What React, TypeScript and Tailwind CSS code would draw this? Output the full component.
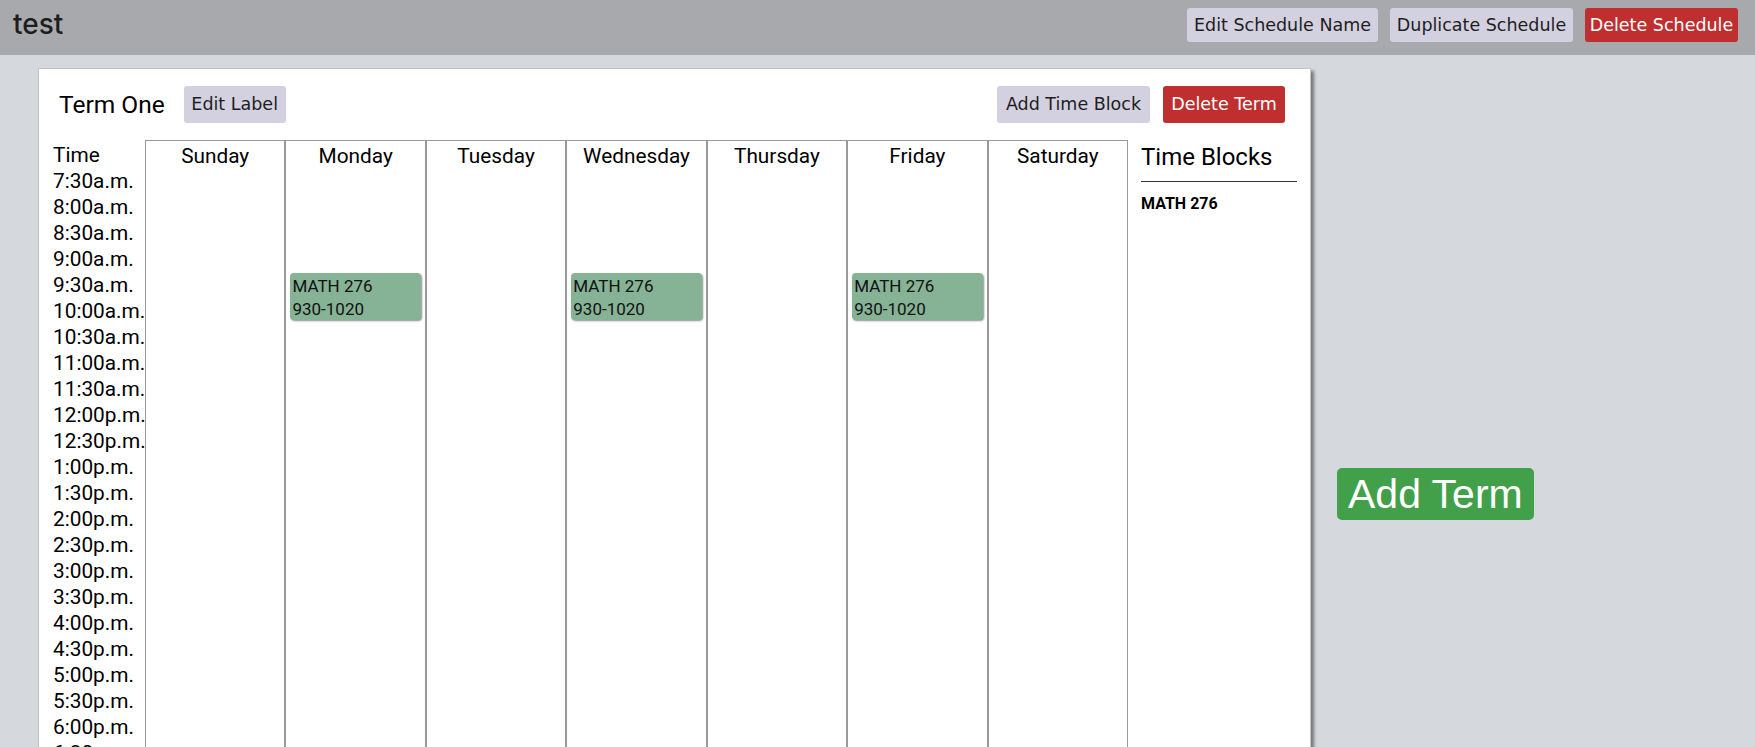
const times = [
  "7:30a.m.", "8:00a.m.", "8:30a.m.", "9:00a.m.", "9:30a.m.", "10:00a.m.", "10:30a.m.",
  "11:00a.m.", "11:30a.m.", "12:00p.m.", "12:30p.m.", "1:00p.m.", "1:30p.m.", "2:00p.m.",
  "2:30p.m.", "3:00p.m.", "3:30p.m.", "4:00p.m.", "4:30p.m.", "5:00p.m.", "5:30p.m.",
  "6:00p.m.", "6:30p.m.", "7:00p.m.", "7:30p.m.", "8:00p.m.", "8:30p.m.", "9:00p.m.",
];

const days = ["Sunday", "Monday", "Tuesday", "Wednesday", "Thursday", "Friday", "Saturday"];

// MATH 276 meets MWF
const meets = ["Monday", "Wednesday", "Friday"];

function TimeBlock() {
  return (
    <div className="absolute left-[4px] right-[4px] top-[132px] h-[47px] rounded-[4px] bg-[#86b296] pl-[2px] pt-[2px] text-left text-[17px] leading-[23px] text-[#111] shadow-[1px_1px_2px_rgba(0,0,0,0.45)]">
      <div>MATH 276</div>
      <div>930-1020</div>
    </div>
  );
}

export default function App() {
  return (
    <div className="h-screen overflow-hidden bg-[#d5d8dc] font-['Roboto',sans-serif] text-black">
      {/* top bar */}
      <header className="flex h-[55px] items-start justify-between bg-[#a8a9ad] pl-[13px] pr-[17px]">
        <h1 className="mt-[8px] font-['Inter',sans-serif] text-[28px] font-medium leading-[33px] text-[#1e1e1e]">
          test
        </h1>
        <div className="mt-[8px] flex gap-[12px] font-['DejaVu_Sans',sans-serif] text-[17.5px]">
          <button className="h-[34px] w-[191px] rounded-[3px] bg-[#d3d1e0] text-[#1e1e1e]">
            Edit Schedule Name
          </button>
          <button className="h-[34px] w-[183px] rounded-[3px] bg-[#d3d1e0] text-[#1e1e1e]">
            Duplicate Schedule
          </button>
          <button className="h-[34px] w-[153px] rounded-[3px] bg-[#bf2f2f] text-white">
            Delete Schedule
          </button>
        </div>
      </header>

      <main className="flex items-center gap-[26px] pb-[13px] pl-[38px] pt-[13px]">
        <section className="w-[1273px] border border-[#c4c4c4] bg-white pb-[22px] pl-[14px] pr-[13px] pt-[17px] shadow-[3px_3px_3px_rgba(0,0,0,0.45)]">
          {/* term header */}
          <div className="flex items-center justify-between pl-[6px] pr-[12px]">
            <div className="flex items-center gap-[19px]">
              <h2 className="text-[24.5px] leading-[28px]">Term One</h2>
              <button className="h-[37px] w-[102px] rounded-[3px] bg-[#d3d1e0] font-['DejaVu_Sans',sans-serif] text-[17.5px] text-[#1e1e1e]">
                Edit Label
              </button>
            </div>
            <div className="flex gap-[13px] font-['DejaVu_Sans',sans-serif] text-[17.5px]">
              <button className="h-[37px] w-[153px] rounded-[3px] bg-[#d3d1e0] text-[#1e1e1e]">
                Add Time Block
              </button>
              <button className="h-[37px] w-[122px] rounded-[3px] bg-[#bf2f2f] text-white">
                Delete Term
              </button>
            </div>
          </div>

          {/* week grid */}
          <div className="mt-[17px] flex">
            <div className="w-[92px] pt-[2px] text-[20.8px] leading-[26px]">
              <div>Time</div>
              {times.map((t) => (
                <div key={t} className="whitespace-nowrap">{t}</div>
              ))}
            </div>

            <div className="grid flex-1 grid-cols-7">
              {days.map((d) => (
                <div key={d} className="relative border border-b-0 border-[#999] pt-[2px] text-center text-[20.8px] leading-[26px]">
                  {d}
                  {meets.includes(d) && <TimeBlock />}
                </div>
              ))}
            </div>

            <aside className="ml-[13px] w-[156px] pt-[3px]">
              <h3 className="border-b border-[#333] pb-[10px] text-[24px] leading-[28px]">Time Blocks</h3>
              <div className="mt-[12px] text-[16px] font-bold leading-[19px]">MATH 276</div>
            </aside>
          </div>
        </section>

        <button className="rounded-[5px] bg-[#43a04a] px-[11px] py-[3px] font-['Liberation_Sans',Arial,sans-serif] text-[41px] leading-[46px] text-white">
          Add Term
        </button>
      </main>
    </div>
  );
}
